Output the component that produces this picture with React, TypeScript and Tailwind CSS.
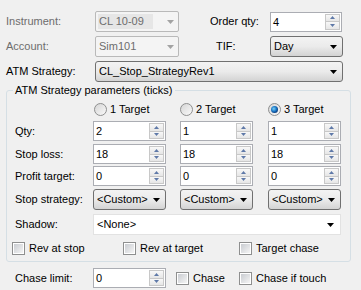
import React from "react";

const Arrow = ({ color = "#000" }: { color?: string }) => (
  <svg width="7" height="4" viewBox="0 0 7 4" className="shrink-0">
    <path d="M0 0h7L3.5 4z" fill={color} />
  </svg>
);

const SpinArrow = ({ up }: { up?: boolean }) => (
  <svg width="5" height="3" viewBox="0 0 5 3">
    <path d={up ? "M0 3h5L2.5 0z" : "M0 0h5L2.5 3z"} fill="#5f79a8" />
  </svg>
);

const Spin = ({ value, className = "w-[73px]" }: { value: string; className?: string }) => {
  return (
    <div className={`${className} h-[20px] flex bg-white border border-[#abadb3]`}>
      <span className="flex-1 pl-[2px] leading-[18px] text-black">{value}</span>
      <div className="flex flex-col w-[15px] my-[1px] mr-[1px]">
        <div className="flex-1 flex items-center justify-center border border-[#c8c8c8] bg-linear-to-b from-[#f8f8f8] to-[#e6e6e6]">
          <SpinArrow up />
        </div>
        <div className="flex-1 flex items-center justify-center border border-t-0 border-[#c8c8c8] bg-linear-to-b from-[#f8f8f8] to-[#e6e6e6]">
          <SpinArrow />
        </div>
      </div>
    </div>
  );
};

const Combo = ({ value, className }: { value: string; className: string }) => {
  return (
    <div
      className={`${className} h-[21px] flex items-center pl-[3px] pr-[5px] rounded-[3px] border border-[#707070] bg-linear-to-b from-[#f3f3f3] via-[#ebebeb] to-[#d3d3d3]`}
    >
      <span className="flex-1 whitespace-nowrap overflow-hidden">{value}</span>
      <Arrow />
    </div>
  );
};

const DisabledCombo = ({ value, selected }: { value: string; selected?: boolean }) => {
  return (
    <div className="w-[84px] h-[21px] flex items-center pl-[2px] pr-[4px] rounded-[2px] border border-[#b9b9b9] bg-[#f4f4f4] text-[#6d6d6d]">
      <span className={`flex-1 h-[15px] leading-[15px] pl-[1px] mr-[14px] ${selected ? "bg-[#e6e6e6]" : ""}`}>
        {value}
      </span>
      <Arrow color="#a3a3a3" />
    </div>
  );
};

const Radio = ({ checked, label }: { checked?: boolean; label: string }) => (
  <div className="flex items-center gap-[3px]">
    <svg width="13" height="13" viewBox="0 0 13 13">
      <defs>
        <linearGradient id="rg" x1="0" y1="0" x2="1" y2="1">
          <stop offset="0" stopColor="#d4d4d4" />
          <stop offset="1" stopColor="#fbfbfb" />
        </linearGradient>
        <radialGradient id="rb" cx="0.4" cy="0.4" r="0.6">
          <stop offset="0" stopColor="#7fd3f5" />
          <stop offset="0.6" stopColor="#1a78c8" />
          <stop offset="1" stopColor="#0c3e80" />
        </radialGradient>
      </defs>
      <circle cx="6.5" cy="6.5" r="6" fill="url(#rg)" stroke="#8e8f8f" />
      {checked && <circle cx="6.5" cy="6.5" r="3.5" fill="url(#rb)" />}
    </svg>
    <span>{label}</span>
  </div>
);

const Check = ({ label }: { label: string }) => (
  <div className="flex items-center gap-[4px]">
    <div className="w-[13px] h-[13px] border border-[#8e8f8f] bg-white p-[1px]">
      <div className="w-full h-full bg-linear-to-br from-[#c9ccd1] to-[#f5f5f5]" />
    </div>
    <span>{label}</span>
  </div>
);

const App = () => {
  return (
    <div className="w-[361px] h-[290px] bg-[#f0f0f0] pt-[11px] pl-[6px] text-[11px] text-black font-['Liberation_Sans',Arial,sans-serif] overflow-hidden">
      <div className="flex items-center h-[21px]">
        <span className="w-[89px] text-[#6d6d6d]">Instrument:</span>
        <DisabledCombo value="CL 10-09" selected />
        <span className="ml-[31px] w-[60px]">Order qty:</span>
        <Spin value="4" className="w-[72px]" />
      </div>
      <div className="flex items-center h-[21px] mt-[4px]">
        <span className="w-[89px] text-[#6d6d6d]">Account:</span>
        <DisabledCombo value="Sim101" />
        <span className="ml-[37px] w-[54px]">TIF:</span>
        <Combo value="Day" className="w-[73px]" />
      </div>
      <div className="flex items-center h-[21px] mt-[4px]">
        <span className="w-[89px]">ATM Strategy:</span>
        <Combo value="CL_Stop_StrategyRev1" className="w-[248px]" />
      </div>

      <div className="relative mt-[8px] w-[345px] h-[172px] rounded-[3px] border border-[#d5dfe5] pl-[8px] pt-[10px]">
        <span className="absolute -top-[8px] left-[6px] px-[2px] bg-[#f0f0f0] leading-[14px]">
          ATM Strategy parameters (ticks)
        </span>

        <div className="flex items-center h-[16px]">
          <span className="w-[79px]" />
          <div className="w-[86px]">
            <Radio label="1 Target" />
          </div>
          <div className="w-[88px]">
            <Radio label="2 Target" />
          </div>
          <Radio checked label="3 Target" />
        </div>

        <div className="flex items-center h-[20px] mt-[4px]">
          <span className="w-[78px]">Qty:</span>
          <Spin value="2" />
          <Spin value="1" className="w-[73px] ml-[14px]" />
          <Spin value="1" className="w-[73px] ml-[15px]" />
        </div>
        <div className="flex items-center h-[20px] mt-[3px]">
          <span className="w-[78px]">Stop loss:</span>
          <Spin value="18" />
          <Spin value="18" className="w-[73px] ml-[14px]" />
          <Spin value="18" className="w-[73px] ml-[15px]" />
        </div>
        <div className="flex items-center h-[20px] mt-[2px]">
          <span className="w-[78px]">Profit target:</span>
          <Spin value="0" />
          <Spin value="0" className="w-[73px] ml-[14px]" />
          <Spin value="0" className="w-[73px] ml-[15px]" />
        </div>
        <div className="flex items-center h-[21px] mt-[3px]">
          <span className="w-[78px]">Stop strategy:</span>
          <Combo value="<Custom>" className="w-[73px]" />
          <Combo value="<Custom>" className="w-[73px] ml-[14px]" />
          <Combo value="<Custom>" className="w-[73px] ml-[15px]" />
        </div>
        <div className="flex items-center h-[21px] mt-[4px]">
          <span className="w-[78px]">Shadow:</span>
          <div className="w-[248px] h-[21px] flex items-center pl-[3px] pr-[6px] bg-white border border-[#e2e2e2]">
            <span className="flex-1">&lt;None&gt;</span>
            <Arrow />
          </div>
        </div>
        <div className="flex items-center h-[14px] mt-[6px] -ml-[3px]">
          <div className="w-[111px]">
            <Check label="Rev at stop" />
          </div>
          <div className="w-[116px]">
            <Check label="Rev at target" />
          </div>
          <Check label="Target chase" />
        </div>
      </div>

      <div className="flex items-center h-[20px] mt-[6px] pl-[9px]">
        <span className="w-[78px]">Chase limit:</span>
        <Spin value="0" />
        <div className="ml-[10px] w-[63px]">
          <Check label="Chase" />
        </div>
        <Check label="Chase if touch" />
      </div>
    </div>
  );
};

export default App;
